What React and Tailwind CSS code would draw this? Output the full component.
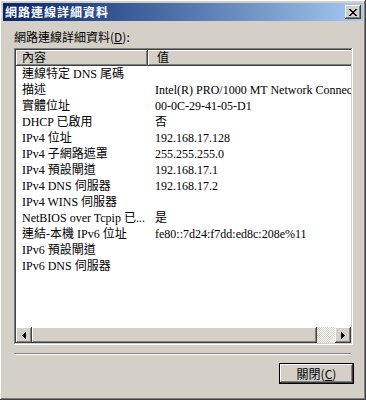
import React from 'react';

const rows = [
  ['連線特定 DNS 尾碼', ''],
  ['描述', 'Intel(R) PRO/1000 MT Network Connection'],
  ['實體位址', '00-0C-29-41-05-D1'],
  ['DHCP 已啟用', '否'],
  ['IPv4 位址', '192.168.17.128'],
  ['IPv4 子網路遮罩', '255.255.255.0'],
  ['IPv4 預設閘道', '192.168.17.1'],
  ['IPv4 DNS 伺服器', '192.168.17.2'],
  ['IPv4 WINS 伺服器', ''],
  ['NetBIOS over Tcpip 已...', '是'],
  ['連結-本機 IPv6 位址', 'fe80::7d24:f7dd:ed8c:208e%11'],
  ['IPv6 預設閘道', ''],
  ['IPv6 DNS 伺服器', ''],
];

// classic 3D bevels
const raised = "shadow-[inset_-1px_-1px_#404040,inset_1px_1px_#ffffff,inset_-2px_-2px_#808080,inset_2px_2px_#d4d0c8]";
const header = "shadow-[inset_-1px_-1px_#404040,inset_1px_1px_#ffffff,inset_-2px_-2px_#808080]";

const CloseGlyph = () => (
  <svg width="8" height="7" viewBox="0 0 8 7" shapeRendering="crispEdges">
    <path d="M0 0h2v1H0zM6 0h2v1H6zM1 1h2v1H1zM5 1h2v1H5zM2 2h4v1H2zM3 3h2v1H3zM2 4h4v1H2zM1 5h2v1H1zM5 5h2v1H5zM0 6h2v1H0zM6 6h2v1H6z" fill="#000" />
  </svg>
);

const ArrowLeft = () => (
  <svg width="4" height="7" viewBox="0 0 4 7" shapeRendering="crispEdges">
    <path d="M0 3h1v1H0zM1 2h1v3H1zM2 1h1v5H2zM3 0h1v7H3z" fill="#000" />
  </svg>
);

const ArrowRight = () => (
  <svg width="4" height="7" viewBox="0 0 4 7" shapeRendering="crispEdges">
    <path d="M0 0h1v7H0zM1 1h1v5H1zM2 2h1v3H2zM3 3h1v1H3z" fill="#000" />
  </svg>
);

export default function App() {
  return (
    <div className={`w-[366px] h-[400px] bg-[#d4d0c8] p-[3px] flex flex-col font-['Liberation_Serif','Noto_Sans_CJK_TC',serif] text-[12px] text-black ${raised}`}>
      {/* title bar */}
      <div className="h-[18px] flex items-center justify-between bg-linear-to-r from-[#0a246a] to-[#a6caf0]">
        <span className="pl-[2px] text-white font-bold tracking-[1px] leading-[18px] font-['Noto_Sans_CJK_TC',sans-serif]">網路連線詳細資料</span>
        <button className={`mr-[2px] w-[16px] h-[14px] bg-[#d4d0c8] flex items-center justify-center ${raised}`}>
          <CloseGlyph />
        </button>
      </div>

      <div className="flex-1 flex flex-col pl-[11px] pr-[10px]">
        <div className="mt-[8px] h-[16px] leading-[16px] font-['Noto_Sans_CJK_TC',sans-serif]">
          網路連線詳細資料(<span className="underline">D</span>):
        </div>

        {/* list view */}
        <div className="mt-[3px] h-[297px] p-[2px] bg-white shadow-[inset_-1px_-1px_#ffffff,inset_1px_1px_#808080,inset_-2px_-2px_#d4d0c8,inset_2px_2px_#404040]">
          <div className="h-full flex flex-col overflow-hidden">
            <div className="h-[16px] flex shrink-0 whitespace-nowrap">
              <div className={`w-[132px] shrink-0 bg-[#d4d0c8] pl-[6px] leading-[16px] ${header}`}>內容</div>
              <div className={`w-[400px] shrink-0 bg-[#d4d0c8] pl-[9px] leading-[16px] ${header}`}>值</div>
            </div>
            <div className="flex-1 overflow-hidden">
              {rows.map(([k, v]) => (
                <div key={k} className="h-[16px] flex whitespace-nowrap leading-[16px]">
                  <div className="w-[132px] shrink-0 pl-[6px]">{k}</div>
                  <div className="shrink-0 pl-[7px]">{v}</div>
                </div>
              ))}
            </div>
            {/* horizontal scrollbar */}
            <div className="h-[16px] flex shrink-0">
              <div className={`w-[16px] bg-[#d4d0c8] flex items-center justify-center ${raised}`}>
                <ArrowLeft />
              </div>
              <div className={`w-[285px] bg-[#d4d0c8] ${raised}`} />
              <div className="flex-1 bg-[image:repeating-conic-gradient(#ffffff_0%_25%,#d4d0c8_0%_50%)] bg-size-[2px_2px]" />
              <div className={`w-[16px] bg-[#d4d0c8] flex items-center justify-center ${raised}`}>
                <ArrowRight />
              </div>
            </div>
          </div>
        </div>

        {/* etched separator */}
        <div className="mt-[8px] mr-[2px] h-[2px] border-t border-t-[#808080] border-b border-b-white" />

        <div className="mt-[8px] flex justify-end">
          <button className="-mr-px w-[75px] h-[21px] border border-black bg-[#d4d0c8]">
            <div className={`w-full h-full flex items-center justify-center leading-none font-['Noto_Sans_CJK_TC',sans-serif] ${raised}`}>
              關閉(<span className="underline">C</span>)
            </div>
          </button>
        </div>
      </div>
    </div>
  );
}
